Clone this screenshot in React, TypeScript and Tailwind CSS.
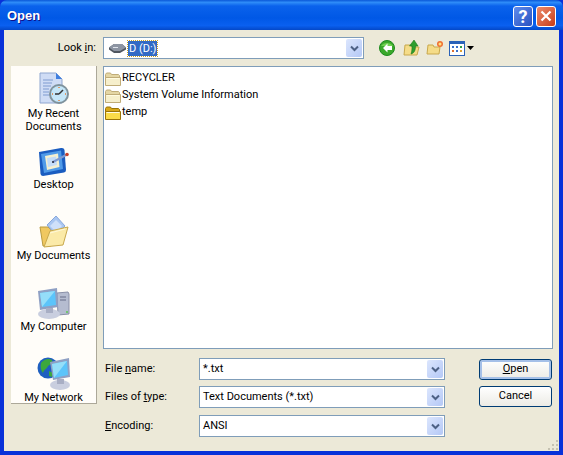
import { ReactNode } from "react";

const font = "font-['Roboto',_'Liberation_Sans',_Arial,_sans-serif]";

function FolderIcon({ dim = false }: { dim?: boolean }) {
  const stroke = dim ? "#c0ac78" : "#9a7408";
  const fill = dim ? "#f6efcc" : "#fbdc48";
  const back = dim ? "#e4d6a4" : "#d8a818";
  return (
    <svg width="16" height="16" viewBox="0 0 16 16" className="shrink-0">
      <path d="M.5 13.500V3.500l1-1.500h4l1 1.500h7l1 1v9z" fill={back} stroke={stroke} />
      <path d="M.5 14.500V6.500h15v8z" fill={fill} stroke={stroke} />
      <path d="M1.500 7.500h13" stroke="#fffbe0" />
    </svg>
  );
}

function DriveIcon() {
  return (
    <svg width="17" height="11" viewBox="0 0 17 11">
      <path d="M0 4.500 5 1h8l4 3.500v2L11 10H5L0 6.500z" fill="#4f5660" />
      <path d="M0 4.500 5 1h8l4 3.500L11 8H5z" fill="#8d95a3" />
      <path d="M4 4.500h5" stroke="#dfe4ec" />
    </svg>
  );
}

function ComboArrow() {
  return (
    <div className="w-[16px] h-[18px] rounded-[2px] bg-gradient-to-br from-[#dce6fd] to-[#b4c8f6] flex items-center justify-center shrink-0">
      <svg width="9" height="7" viewBox="0 0 9 7">
        <path d="M1 1.500 4.500 5 8 1.500" fill="none" stroke="#4d6185" strokeWidth="2" />
      </svg>
    </div>
  );
}

function RecentIcon() {
  return (
    <svg width="32" height="34" viewBox="0 0 32 34">
      <path d="M2 1h16l6 6v24H2z" fill="#cfdcf5" stroke="#8fa6d0" />
      <path d="M18 1v6h6z" fill="#3f7fe0" />
      <path d="M5 8h10M5 11h9M5 14h8M5 17h6M5 20h6M5 23h7" stroke="#7f9bd0" />
      <circle cx="21" cy="22" r="10" fill="#7f929c" />
      <circle cx="21" cy="22" r="8" fill="#c5e6f8" />
      <path d="M21 22l4-4M21 22h-4" stroke="#333" strokeWidth="1.500" />
      <path d="M21 15v1M21 28v1M14 22h1M27 22h1" stroke="#e8803a" strokeWidth="1.500" />
    </svg>
  );
}

function DesktopIcon() {
  return (
    <svg width="31" height="30" viewBox="0 0 31 30">
      <path d="M1 5 23 1q3-.5 3.500 2L28 23q0 2-2 2.500L5 29q-2 0-2.500-2z" fill="#1a5cc0" />
      <path d="M3 7 23 3.500 25 22 6 26z" fill="#4f9ae8" />
      <path d="M7 9 20 6.500 21.500 20 9 23z" fill="#f5f0d0" />
      <path d="M9 11l9-1.500 1 8.500-9 2z" fill="#c5ddf8" />
      <path d="M15 15 28 8" stroke="#7f9ad0" strokeWidth="2" />
      <circle cx="29" cy="7.500" r="1.800" fill="#c8402a" />
      <circle cx="15" cy="15" r="1" fill="#223" />
    </svg>
  );
}

function DocsIcon() {
  return (
    <svg width="30" height="33" viewBox="0 0 30 33">
      <path d="M1 12h8l2 2h1v17H4z" fill="#f0c860" stroke="#b89a40" />
      <path d="M8 10 17 1l9 10-9 9z" fill="#a9c6f2" stroke="#88a8dc" />
      <path d="M11 11l6-6 6 6-6 6z" fill="#cfe0fa" />
      <path d="M5 32 11 16l18-4-5 18z" fill="#fbeaa8" stroke="#c8a84c" />
      <path d="M11 18l15-4" stroke="#fff8d8" />
    </svg>
  );
}

function ComputerIcon() {
  return (
    <svg width="33" height="31" viewBox="0 0 33 31">
      <path d="M20 5l11-1 1 2v20l-11 1z" fill="#b5bcd0" stroke="#8a90a8" />
      <path d="M23 9h6M23 12h6" stroke="#666c88" />
      <circle cx="30" cy="24" r="1" fill="#5cc850" />
      <path d="M1 3 20 0l1 19-18 3z" fill="#8fa0c4" />
      <path d="M3 5 18 3l1 14-14 2z" fill="#5cc4fa" />
      <path d="M3 5 18 3 5 19z" fill="#95def9" />
      <ellipse cx="12" cy="26" rx="11" ry="5" fill="#c9cedf" />
      <path d="M9 20h7v5H9z" fill="#a8aec4" />
    </svg>
  );
}

function NetworkIcon() {
  return (
    <svg width="33" height="33" viewBox="0 0 33 33">
      <circle cx="11" cy="11" r="10.500" fill="#1f5fc0" />
      <path d="M4 6c3-4 8-5 11-3 1 3-2 5-4 6-1 3-4 3-5 7-2-2-3-6-2-10z" fill="#3ca83c" />
      <path d="M12 14l4 2-1 4-3-1z" fill="#3ca83c" />
      <path d="M13 5 32 1l1 19-17 3z" fill="#8fa0c4" />
      <path d="M15 7l15-3 1 14-14 3z" fill="#5cc4fa" />
      <path d="M15 7l15-3-13 17z" fill="#95def9" />
      <ellipse cx="23" cy="28" rx="10" ry="5" fill="#c9cedf" />
      <path d="M20 22h7v5h-7z" fill="#a8aec4" />
    </svg>
  );
}

function PlaceItem({ icon, label }: { icon: ReactNode; label: ReactNode }) {
  return (
    <div className="h-[71px] shrink-0 flex flex-col items-center text-center leading-[13px]">
      <div className="h-[40px] flex items-end justify-center pb-[1px]">{icon}</div>
      <div>{label}</div>
    </div>
  );
}

function Field({ label, value, top }: { label: ReactNode; value: string; top: string }) {
  return (
    <div className={`flex items-center ${top}`}>
      <div className="w-[96px] pl-[2px]">{label}</div>
      <div className="w-[246px] h-[22px] bg-white border border-[#7f9db9] flex items-center justify-between pl-[3px] pr-[1px]">
        <span>{value}</span>
        <ComboArrow />
      </div>
    </div>
  );
}

export default function App() {
  return (
    <div className={`${font} relative w-[563px] h-[455px] bg-[#0831d9] text-[11px] text-black flex flex-col overflow-hidden`}>
      {/* title bar */}
      <div className="h-[30px] shrink-0 bg-[linear-gradient(180deg,#0a58d8_0%,#2e8cf8_8%,#0a62ec_20%,#0058e6_60%,#0a60f0_85%,#0448c8_100%)] rounded-t-[7px] flex items-center pl-[7px] pr-[7px] pt-[2px]">
        <span className="text-[13px] font-bold text-white font-['Liberation_Sans',_sans-serif] [text-shadow:1px_1px_0_#0f1089]">Open</span>
        <div className="ml-auto flex gap-[3px]">
          <div className="w-[20px] h-[21px] rounded-[3px] border border-white bg-gradient-to-br from-[#5f8cec] to-[#2a50c0] text-white text-[18px] font-bold leading-[19px] text-center">?</div>
          <div className="w-[20px] h-[21px] rounded-[3px] border border-white bg-gradient-to-br from-[#ec8a6a] to-[#c63a14] flex items-center justify-center">
            <svg width="12" height="12" viewBox="0 0 12 12">
              <path d="M1.500 1.500l9 9M10.500 1.500l-9 9" stroke="white" strokeWidth="2.200" />
            </svg>
          </div>
        </div>
      </div>

      {/* dialog body */}
      <div className="flex-1 mx-[4px] mb-[4px] bg-[#ece9d8] flex flex-col min-h-0">
        <div className="h-[22px] mt-[7px] flex items-center shrink-0">
          <div className="w-[92px] text-right">Look <span className="underline">i</span>n:</div>
          <div className="ml-[7px] w-[261px] h-[22px] bg-white border border-[#7f9db9] flex items-center pl-[5px] pr-[1px]">
            <DriveIcon />
            <span className="ml-[2px] bg-[#316ac5] text-white px-[1px] leading-[15px] outline-1 outline-dotted outline-[#c8a020]">D (D:)</span>
            <div className="ml-auto"><ComboArrow /></div>
          </div>
          <div className="ml-[14px] flex items-center">
            <svg width="18" height="18" viewBox="0 0 18 18">
              <circle cx="9" cy="9" r="7.500" fill="#3aa82a" stroke="#1d8a1d" />
              <path d="M3 7a7 6 0 0 1 12 0z" fill="#6fd050" />
              <path d="M9.500 4.500 5 9l4.500 4.500V11H14V7H9.500z" fill="white" />
            </svg>
            <svg width="18" height="18" viewBox="0 0 18 18" className="ml-[7px]">
              <path d="M1 16 2 6h6l1 2h7l-2 8z" fill="#f5dc88" stroke="#c8a84c" />
              <path d="M8 15c1-3 1-5 1-8H6.500L11 1l4 6h-2.500c0 4-1 7-4.500 8z" fill="#2e9e2e" stroke="#1a7a1a" strokeWidth=".6" />
            </svg>
            <svg width="18" height="16" viewBox="0 0 18 16" className="ml-[5px]">
              <path d="M1 14 2 5h5l1 2h6l-1 7z" fill="#f5dc88" stroke="#c8a84c" />
              <circle cx="14" cy="4" r="3" fill="#f07030" />
              <circle cx="14" cy="4" r="1.500" fill="#ffe080" />
            </svg>
            <svg width="16" height="15" viewBox="0 0 16 15" className="ml-[5px]">
              <rect x=".5" y=".5" width="15" height="14" fill="white" stroke="#2a62b8" />
              <rect x="1" y="1" width="14" height="2" fill="#2a62b8" />
              <path d="M3 5h2v2H3z" fill="#3a70c8" />
              <path d="M7 5h2v2H7z" fill="#3a70c8" />
              <path d="M11 5h2v2h-2z" fill="#2e9e4a" />
              <path d="M3 9h2v2H3z" fill="#e07030" />
              <path d="M7 9h2v2H7z" fill="#3a70c8" />
              <path d="M11 9h2v2h-2z" fill="#e0a030" />
            </svg>
            <svg width="7" height="4" viewBox="0 0 7 4" className="ml-[2px]">
              <path d="M0 0h7L3.500 4z" fill="black" />
            </svg>
          </div>
        </div>

        <div className="flex-1 flex min-h-0 mt-[7px] pl-[7px]">
          {/* places bar */}
          <div className="w-[86px] h-[338px] bg-[#fffdf9] border-r border-b border-[#aca899] overflow-hidden flex flex-col pt-[1px] shrink-0">
            <PlaceItem icon={<RecentIcon />} label={<>My Recent<br />Documents</>} />
            <PlaceItem icon={<DesktopIcon />} label="Desktop" />
            <PlaceItem icon={<DocsIcon />} label="My Documents" />
            <PlaceItem icon={<ComputerIcon />} label="My Computer" />
            <PlaceItem icon={<NetworkIcon />} label="My Network" />
          </div>

          <div className="flex-1 ml-[6px] mr-[6px] min-w-0 flex flex-col">
            {/* file list */}
            <div className="h-[283px] bg-white border border-[#7f9db9] pt-[3px] pl-[1px] shrink-0">
              <div className="h-[17px] flex items-center gap-[1px]"><FolderIcon dim /><span>RECYCLER</span></div>
              <div className="h-[17px] flex items-center gap-[1px]"><FolderIcon dim /><span>System Volume Information</span></div>
              <div className="h-[17px] flex items-center gap-[1px]"><FolderIcon /><span>temp</span></div>
            </div>

            <div className="flex mt-[9px]">
              <div className="flex flex-col">
                <Field label={<>File <span className="underline">n</span>ame:</>} value="*.txt" top="" />
                <Field label={<>Files of <span className="underline">t</span>ype:</>} value="Text Documents (*.txt)" top="mt-[6px]" />
                <Field label={<><span className="underline">E</span>ncoding:</>} value="ANSI" top="mt-[7px]" />
              </div>
              <div className="ml-[34px] flex flex-col pt-[1px]">
                <button className="w-[73px] h-[21px] rounded-[3px] border border-[#003c74] bg-gradient-to-b from-white to-[#ecebe5] shadow-[inset_0_0_0_2px_#a5c0e8] text-center">
                  <span className="underline">O</span>pen
                </button>
                <button className="w-[73px] h-[21px] mt-[6px] rounded-[3px] border border-[#003c74] bg-gradient-to-b from-white to-[#ecebe5] text-center">
                  Cancel
                </button>
              </div>
            </div>
          </div>
        </div>
      </div>

      {/* resize grip */}
      <svg width="12" height="12" viewBox="0 0 12 12" className="absolute right-[4px] bottom-[4px]">
        <path d="M9 1h2v2H9zM5 5h2v2H5zM9 5h2v2H9zM1 9h2v2H1zM5 9h2v2H5zM9 9h2v2H9z" fill="#c5c2b2" />
      </svg>
    </div>
  );
}
